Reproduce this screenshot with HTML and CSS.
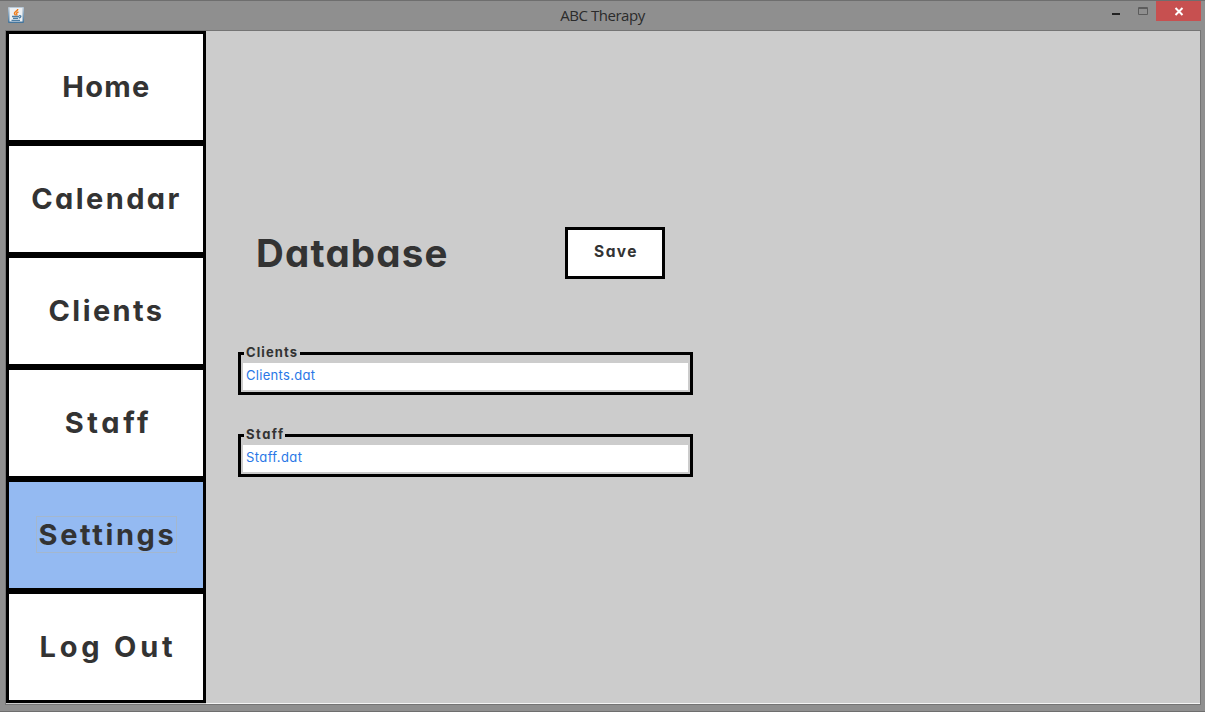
FILE: index.html
```html
<!DOCTYPE html>
<html lang="en">
<head>
<meta charset="utf-8">
<title>ABC Therapy</title>
<link rel="stylesheet" href="styles.css">
</head>
<body>
<div class="window">
  <header class="titlebar">
    <svg class="app-icon" width="16" height="16" viewBox="0 0 16 16">
      <defs><linearGradient id="g" x1="0" y1="0" x2="0" y2="1"><stop offset="0" stop-color="#bccbd8"/><stop offset="1" stop-color="#41739a"/></linearGradient></defs>
      <rect width="16" height="16" rx="1" fill="url(#g)"/>
      <rect x="1.500" y="1" width="13" height="13.500" fill="#edf0f3"/>
      <path d="M9.800 2C10 4 6 4.800 6.400 6.500C6.600 7.300 7.500 7.800 7.500 8.600M10.500 4.800C8.500 5.700 8 6.500 8.800 7.300C9.200 7.900 8.800 8.300 8.500 8.600" fill="none" stroke="#ef7d1c" stroke-width="1.400"/>
      <path d="M4 9.500H11M5 11.300H10M3.500 13.400H12M11 8.800C13.800 8.200 13.200 10.700 10.800 11" fill="none" stroke="#4f7ea3" stroke-width="1.300"/>
    </svg>
    <h1 class="title">ABC Therapy</h1>
    <div class="controls">
      <svg class="control-icons" width="44" height="20" viewBox="0 0 44 20">
        <rect x="0" y="12" width="8" height="2" fill="#222"/>
        <path d="M26.500 6.500H35.500V13.500H26.500ZM26 7.500H36" fill="none" stroke="#5c5c5c"/>
      </svg>
      <svg class="close" width="45" height="20" viewBox="0 0 45 20">
        <path d="M19.500 7L26.500 14M26.500 7L19.500 14" stroke="#fff" stroke-width="2"/>
      </svg>
    </div>
  </header>
  <div class="body">
    <nav class="sidebar">
      <button class="nav"><span class="home">Home</span></button>
      <button class="nav"><span class="calendar">Calendar</span></button>
      <button class="nav"><span class="clients">Clients</span></button>
      <button class="nav"><span class="staff">Staff</span></button>
      <button class="nav active"><span class="settings">Settings</span></button>
      <button class="nav"><span class="logout">Log Out</span></button>
    </nav>
    <main class="content">
      <div class="heading-row">
        <h2 class="heading">Database</h2>
        <button class="save"><span>Save</span></button>
      </div>
      <div class="group">
        <label class="legend legend-clients">Clients</label>
        <div class="field field-clients">Clients.dat</div>
      </div>
      <div class="group">
        <label class="legend legend-staff">Staff</label>
        <div class="field field-staff">Staff.dat</div>
      </div>
    </main>
  </div>
</div>
</body>
</html>
```
FILE: styles.css
```css
* { box-sizing: border-box; }
body {
  margin: 0;
  font-family: Inter, "Liberation Sans", sans-serif;
  font-feature-settings: "cv11";
  color: #333;
}
.window {
  width: 1205px;
  height: 712px;
  background: #8f8f8f;
  border-top: 1px solid #6e6e6e;
  border-bottom: 1px solid #6e6e6e;
  overflow: hidden;
}
.titlebar {
  height: 29px;
  display: grid;
  grid-template-columns: 200px 1fr 200px;
  padding: 0 4px 0 8px;
}
.app-icon { margin-top: 6px; }
.title {
  margin: 0;
  padding-right: 4px;
  text-align: center;
  font: 15px/29px "Open Sans", sans-serif;
  letter-spacing: -0.45px;
  color: #2b2b2b;
}
.controls { display: flex; align-items: flex-start; justify-content: flex-end; }
.close { background: #c75050; }
.body {
  display: flex;
  width: 1196px;
  height: 675px;
  margin-left: 5px;
  border: 1px solid #747474;
  background: #ccc;
}
.sidebar { width: 200px; height: 672px; flex: none; }
.nav {
  display: flex;
  align-items: center;
  justify-content: center;
  width: 200px;
  height: 112px;
  padding: 0 0 2px 1px;
  border: 3px solid #000;
  background: #fff;
  color: #333;
  font: 700 29px/35px Inter, sans-serif;
  font-feature-settings: "cv11";
  white-space: nowrap;
}
.home { letter-spacing: 1.3px; }
.calendar { letter-spacing: 2.4px; }
.clients { letter-spacing: 2.4px; }
.staff { padding-left: 4px; letter-spacing: 3.6px; }
.settings { padding-left: 2px; letter-spacing: 2.6px; }
.logout { padding-left: 3px; letter-spacing: 3.8px; }
.active { background: #94baf2; }
.active span { outline: 1px solid #a4b7cd; }
.content {
  flex: 1;
  padding: 196px 0 0 32px;
  border-bottom: 1px solid #f4f4f4;
}
.heading-row { display: flex; height: 52px; margin-bottom: 73px; }
.heading {
  width: 327px;
  margin: 0;
  padding-left: 18px;
  font-size: 38.5px;
  font-weight: 700;
  line-height: 53px;
  letter-spacing: 1.2px;
}
.save {
  width: 100px;
  height: 52px;
  padding: 0 0 2px 2px;
  border: 3px solid #000;
  background: #fff;
  color: #333;
  font: 700 15.5px/20px Inter, sans-serif;
  font-feature-settings: "cv11";
  letter-spacing: 1.4px;
}
.group {
  position: relative;
  width: 455px;
  height: 43px;
  margin-bottom: 39px;
  padding: 8px 2px 2px;
  border: 3px solid #000;
}
.legend {
  position: absolute;
  left: 3px;
  top: -11px;
  height: 16px;
  padding-left: 2px;
  background: #ccc;
  font-size: 13px;
  font-weight: 700;
  line-height: 17px;
}
.legend-clients { width: 56px; letter-spacing: 1.1px; }
.legend-staff { width: 41px; letter-spacing: 1.5px; }
.field {
  height: 27px;
  padding-left: 3px;
  background: #fff;
  color: #2a77e6;
  font-size: 13px;
  line-height: 25px;
}
.field-clients { letter-spacing: 0.3px; }
.field-staff { letter-spacing: 0.4px; }
```
